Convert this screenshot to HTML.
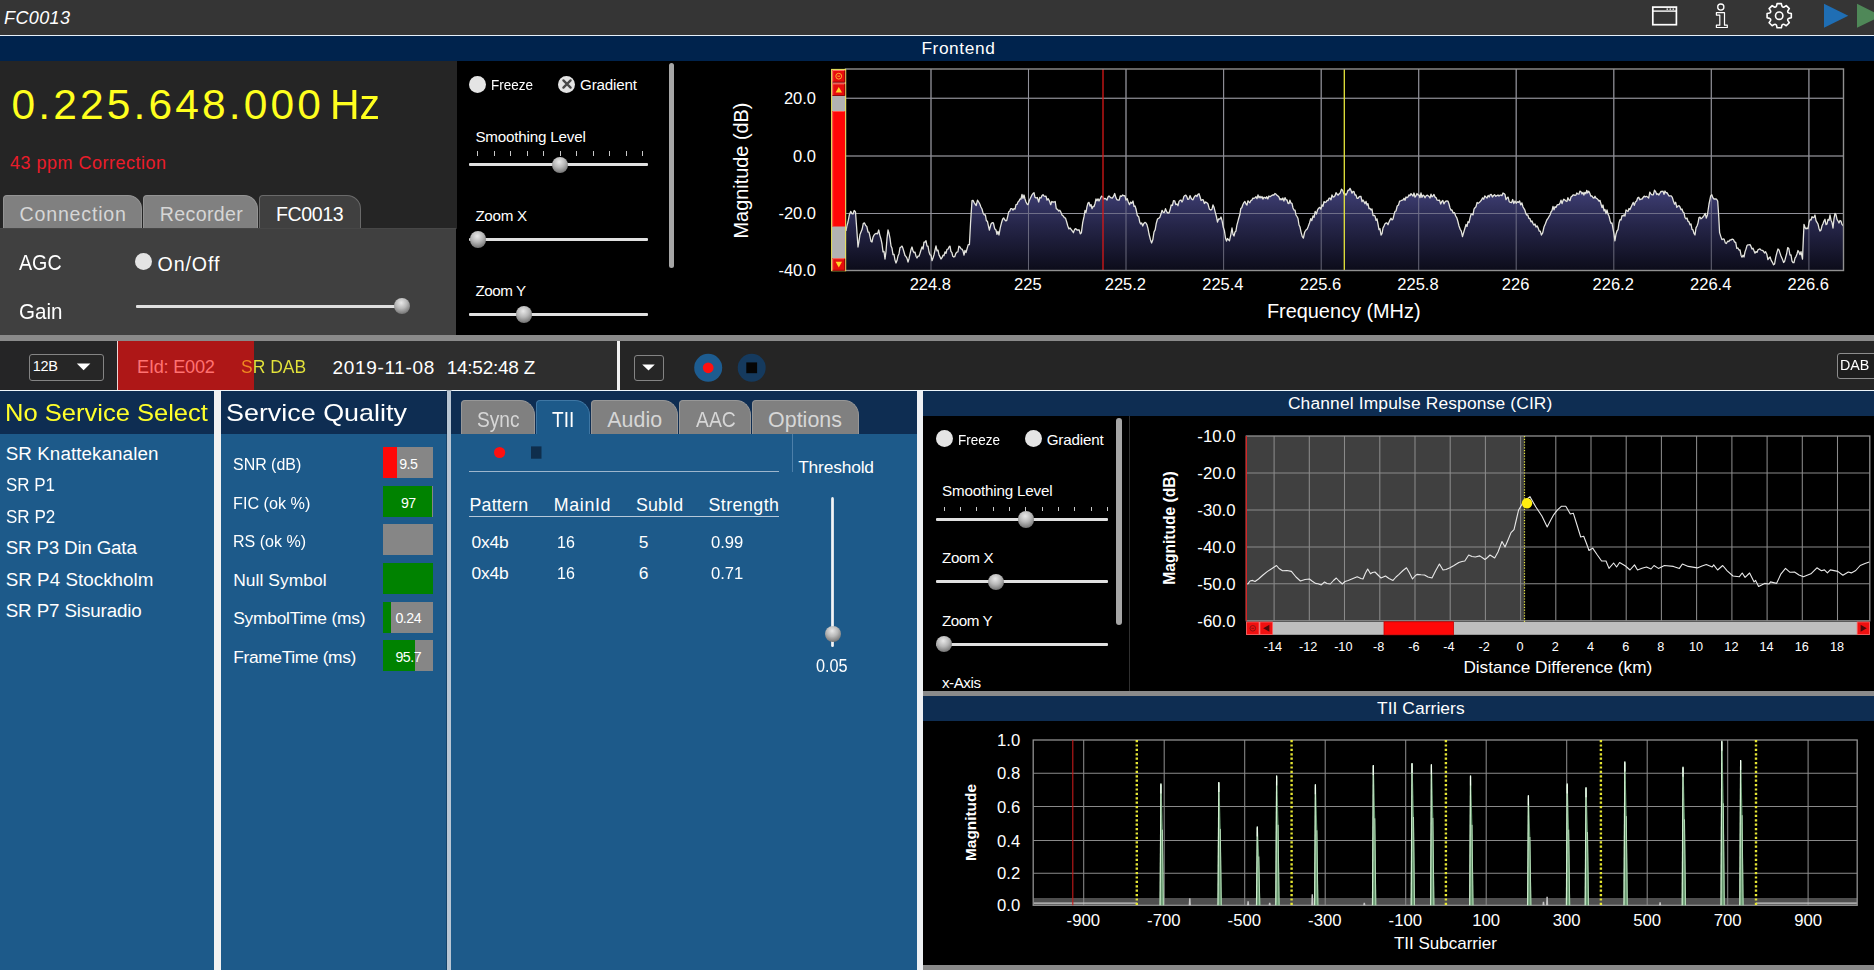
<!DOCTYPE html>
<html lang="en"><head><meta charset="utf-8"><title>FC0013</title>
<style>
*{margin:0;padding:0;box-sizing:border-box}
html,body{width:1874px;height:970px;overflow:hidden;background:#000}
body{position:relative;font-family:"Liberation Sans",Arial,sans-serif;color:#fff}
div,span.t,svg{position:absolute}
span.t{white-space:nowrap;display:block}
.thumb{width:16.4px;height:16.4px;border-radius:50%;background:radial-gradient(circle at 45% 30%,#e8e8e8 0%,#b8b8b8 40%,#6a6a6a 85%,#555 100%)}
.radio{width:17px;height:17px;border-radius:50%;background:#e4e4e4}
.trk{height:3px;background:#e0e0e0;border-radius:1px}
</style></head>
<body>
<div class="titlebar" style="left:0px;top:0px;width:1874px;height:35px;background:#353535;"></div>
<div style="left:0px;top:34.7px;width:1874px;height:1.5px;background:#e6f0fa;"></div>
<div class="fe-title" style="left:0px;top:36px;width:1874px;height:25px;background:#00234d;"></div>
<span class="t" style="left:4.00px;top:6.56px;font-size:18px;line-height:23px;color:#fff;letter-spacing:0.384px;font-style:italic;">FC0013</span>
<span class="t" style="left:921.40px;top:36.71px;font-size:17.3px;line-height:22px;color:#fff;letter-spacing:0.602px;">Frontend</span>
<svg style="left:1640px;top:0" width="234" height="35" viewBox="1640 0 234 35" fill="none" stroke="#fff">
<rect x="1652.8" y="7.1" width="23.6" height="17.6" stroke-width="1.7"/>
<line x1="1652.8" y1="11.1" x2="1676.4" y2="11.1" stroke-width="1.4"/>
<line x1="1666.5" y1="9.2" x2="1674.5" y2="9.2" stroke-width="1.2" stroke-dasharray="1.6 1.4"/>
<circle cx="1720.8" cy="7.1" r="3.1" stroke-width="1.3"/>
<path d="M1716.4 12.7H1724.5V25.2H1727.3V27.5H1716.4V25.2H1719.8V15.1H1716.4Z" stroke-width="1.2" stroke-linejoin="round"/>
<path id="gear" stroke-width="1.6" stroke-linejoin="round" d="M1776.53 6.06L1777.06 3.59L1781.34 3.59L1781.87 6.06Q1782.53 7.66 1784.13 7.00L1786.25 5.62L1789.28 8.65L1787.90 10.77Q1787.24 12.37 1788.84 13.03L1791.31 13.56L1791.31 17.84L1788.84 18.37Q1787.24 19.03 1787.90 20.63L1789.28 22.75L1786.25 25.78L1784.13 24.40Q1782.53 23.74 1781.87 25.34L1781.34 27.81L1777.06 27.81L1776.53 25.34Q1775.87 23.74 1774.27 24.40L1772.15 25.78L1769.12 22.75L1770.50 20.63Q1771.16 19.03 1769.56 18.37L1767.09 17.84L1767.09 13.56L1769.56 13.03Q1771.16 12.37 1770.50 10.77L1769.12 8.65L1772.15 5.62L1774.27 7.00Q1775.87 7.66 1776.53 6.06Z"/>
<circle cx="1779.2" cy="15.7" r="3.7" stroke-width="1.6"/>
<path d="M1824 3.8L1848.3 15.8L1824 27.8Z" fill="#1f6eb4" stroke="none"/>
<path d="M1857 3.8L1881.3 15.8L1857 27.8Z" fill="#4f8858" stroke="none"/>
</svg>
<div class="tuner" style="left:0px;top:61px;width:457px;height:168px;background:#252525;"></div>
<span class="t" style="left:11.50px;top:77.97px;font-size:42.5px;line-height:54px;color:#ffff1e;letter-spacing:3.143px;">0.225.648.000</span>
<span class="t" style="left:330.30px;top:77.97px;font-size:42.5px;line-height:54px;color:#ffff1e;transform:scaleX(0.9643);transform-origin:0 50%;">Hz</span>
<span class="t" style="left:10.00px;top:151.56px;font-size:18px;line-height:23px;color:#ea1c2a;letter-spacing:0.497px;">43 ppm Correction</span>
<div class="tab" style="left:3px;top:195px;width:139px;height:33.4px;background:#808080;border-radius:4px 14px 0 0;border:1px solid #949494;border-bottom:none;"></div>
<span class="t" style="left:19.50px;top:202.11px;font-size:19.6px;line-height:25px;color:#d6d6d6;letter-spacing:0.814px;">Connection</span>
<div class="tab" style="left:143px;top:195px;width:115px;height:33.4px;background:#808080;border-radius:4px 14px 0 0;border:1px solid #949494;border-bottom:none;"></div>
<span class="t" style="left:159.80px;top:202.11px;font-size:19.6px;line-height:25px;color:#d6d6d6;letter-spacing:0.335px;">Recorder</span>
<div class="tab" style="left:259px;top:195px;width:102px;height:33.4px;background:#404040;border-radius:4px 14px 0 0;border:1px solid #6a6a6a;border-bottom:none;"></div>
<span class="t" style="left:275.90px;top:202.11px;font-size:19.6px;line-height:25px;color:#fff;letter-spacing:-0.415px;">FC0013</span>
<div class="tabpage" style="left:0px;top:228px;width:456px;height:107px;background:#404040;border-top:1px solid #474747;"></div>
<span class="t" style="left:18.50px;top:249.38px;font-size:21.7px;line-height:28px;color:#fff;transform:scaleX(0.9068);transform-origin:0 50%;">AGC</span>
<span class="t" style="left:18.50px;top:297.68px;font-size:21.7px;line-height:28px;color:#fff;transform:scaleX(0.9479);transform-origin:0 50%;">Gain</span>
<div class="radio" style="left:135.2px;top:253.0px"></div>
<span class="t" style="left:157.50px;top:251.51px;font-size:19.6px;line-height:25px;color:#fff;letter-spacing:0.914px;">On/Off</span>
<div class="trk" style="left:136.0px;top:304.5px;width:265.0px"></div>
<div class="thumb" style="left:393.8px;top:297.8px"></div>
<div class="fe-ctrl" style="left:457px;top:61px;width:220px;height:274px;background:#000;"></div>
<div class="radio" style="left:469.0px;top:75.5px"></div>
<span class="t" style="left:491.00px;top:75.23px;font-size:15.2px;line-height:19px;color:#fff;transform:scaleX(0.8885);transform-origin:0 50%;">Freeze</span>
<div class="radio" style="left:558.1px;top:75.5px"></div>
<svg style="left:557.6px;top:75.0px" width="18" height="18" viewBox="-9 -9 18 18"><path d="M-3.6 -3.6L3.6 3.6M3.6 -3.6L-3.6 3.6" stroke="#484848" stroke-width="2.3" stroke-linecap="round"/></svg>
<span class="t" style="left:580.00px;top:75.23px;font-size:15.2px;line-height:19px;color:#fff;letter-spacing:-0.185px;">Gradient</span>
<span class="t" style="left:475.40px;top:126.73px;font-size:15.2px;line-height:19px;color:#fff;letter-spacing:-0.189px;">Smoothing Level</span>
<div style="left:477.0px;top:151px;width:1px;height:5px;background:#c8c8c8"></div><div style="left:493.5px;top:151px;width:1px;height:5px;background:#c8c8c8"></div><div style="left:510.1px;top:151px;width:1px;height:5px;background:#c8c8c8"></div><div style="left:526.6px;top:151px;width:1px;height:5px;background:#c8c8c8"></div><div style="left:543.1px;top:151px;width:1px;height:5px;background:#c8c8c8"></div><div style="left:559.6px;top:151px;width:1px;height:5px;background:#c8c8c8"></div><div style="left:576.2px;top:151px;width:1px;height:5px;background:#c8c8c8"></div><div style="left:592.7px;top:151px;width:1px;height:5px;background:#c8c8c8"></div><div style="left:609.2px;top:151px;width:1px;height:5px;background:#c8c8c8"></div><div style="left:625.8px;top:151px;width:1px;height:5px;background:#c8c8c8"></div><div style="left:642.3px;top:151px;width:1px;height:5px;background:#c8c8c8"></div>
<div class="trk" style="left:469.4px;top:163.2px;width:178.4px"></div>
<div class="thumb" style="left:551.8px;top:156.5px"></div>
<span class="t" style="left:475.40px;top:206.43px;font-size:15.2px;line-height:19px;color:#fff;letter-spacing:-0.300px;">Zoom X</span>
<div class="trk" style="left:469.4px;top:237.9px;width:178.4px"></div>
<div class="thumb" style="left:469.6px;top:231.2px"></div>
<span class="t" style="left:475.40px;top:281.43px;font-size:15.2px;line-height:19px;color:#fff;letter-spacing:-0.434px;">Zoom Y</span>
<div class="trk" style="left:469.4px;top:312.9px;width:178.4px"></div>
<div class="thumb" style="left:515.6px;top:306.2px"></div>
<div class="sb" style="left:668.5px;top:62.5px;width:5.5px;height:205.5px;background:#a6a6a6;border-radius:3px;"></div>
<div class="fe-plot" style="left:677px;top:61px;width:1197px;height:274px;background:#000;"></div>
<svg class="fe-chart" style="left:700px;top:61px" width="1174" height="274" viewBox="700 61 1174 274" font-family="Liberation Sans,Arial,sans-serif">
<defs><linearGradient id="feg" x1="0" y1="185" x2="0" y2="272" gradientUnits="userSpaceOnUse"><stop offset="0" stop-color="#42427a"/><stop offset="0.45" stop-color="#26264a"/><stop offset="1" stop-color="#0b0b18"/></linearGradient></defs>
<path d="M931.0 69V270.5M1028.5 69V270.5M1126.0 69V270.5M1223.6 69V270.5M1321.2 69V270.5M1418.7 69V270.5M1516.2 69V270.5M1613.8 69V270.5M1711.3 69V270.5M1808.9 69V270.5M845.5 98.3H1843.5M845.5 156H1843.5M845.5 213.4H1843.5" stroke="#868686" stroke-width="1.05" fill="none"/>
<polygon points="846.5,270.5 846.0,231.0 847.0,225.5 848.0,222.0 849.4,214.7 850.7,211.4 851.9,213.6 853.0,214.0 854.2,210.5 855.5,212.0 856.8,229.7 858.0,247.0 859.0,241.2 860.0,234.4 861.0,232.0 862.2,229.0 863.3,223.3 864.5,223.0 865.7,225.6 866.8,226.5 868.0,232.0 869.0,232.1 870.0,236.6 871.0,241.4 872.0,242.0 873.0,237.2 874.0,235.1 875.0,234.0 876.2,233.4 877.5,233.9 878.7,230.0 879.8,235.1 880.9,238.7 882.0,244.0 883.0,251.8 884.0,251.4 885.0,259.0 886.0,251.4 887.0,238.4 888.0,230.0 889.0,233.3 890.0,238.4 891.0,246.0 892.0,248.3 893.0,254.6 894.0,254.3 895.0,260.1 896.0,263.0 897.0,260.6 898.0,255.9 899.0,253.7 900.0,247.7 901.0,247.0 902.0,246.1 903.0,248.6 904.0,252.0 905.0,255.5 906.0,256.6 907.0,258.4 908.0,262.0 909.0,258.7 910.0,254.2 911.0,249.6 912.0,247.0 913.0,250.9 914.0,252.6 915.0,252.1 916.0,256.2 917.0,258.0 918.0,256.1 919.0,256.2 920.0,253.3 921.0,250.0 922.0,246.9 923.0,249.1 924.0,242.2 925.0,242.1 926.0,240.7 927.0,246.0 928.0,246.2 929.0,252.0 930.0,254.8 931.0,255.1 932.0,260.7 933.0,258.0 934.0,254.9 935.0,250.1 936.0,246.0 937.0,250.8 938.0,250.1 939.0,254.9 940.0,256.9 941.0,259.0 942.0,257.7 943.0,255.2 944.0,255.7 945.0,252.0 946.0,253.3 947.0,249.3 948.0,249.2 949.0,247.0 950.0,246.1 950.9,251.4 951.9,252.7 952.8,256.3 953.8,257.0 954.7,256.7 955.8,253.5 956.8,252.2 957.9,251.9 958.9,246.2 960.0,247.0 961.0,248.8 962.0,249.1 963.0,250.8 964.0,255.0 965.0,250.4 966.0,252.6 967.0,249.0 968.2,244.7 969.4,244.7 970.6,222.0 972.0,200.7 973.0,200.3 974.0,202.3 975.0,204.0 976.2,205.5 977.5,200.2 978.7,202.0 979.8,204.0 980.9,207.0 982.0,209.0 983.1,213.2 984.3,214.9 985.4,215.0 986.4,220.9 987.4,221.2 988.4,225.8 989.4,230.0 991.0,224.0 992.2,222.7 993.4,223.0 994.7,228.7 996.0,230.0 997.0,234.3 998.0,231.3 999.0,235.0 1000.2,227.8 1001.5,222.8 1002.7,219.0 1003.7,217.9 1004.7,219.8 1005.7,220.8 1006.7,220.7 1007.7,216.3 1008.7,211.8 1009.7,211.2 1010.7,208.7 1011.9,208.6 1013.0,210.0 1014.0,208.6 1015.0,209.1 1016.0,204.7 1017.0,204.4 1018.0,201.9 1019.0,201.1 1020.0,199.0 1021.0,199.0 1022.0,194.4 1023.0,198.3 1024.0,195.0 1025.0,199.0 1026.0,202.0 1027.0,204.0 1028.0,204.7 1029.2,200.7 1030.5,198.0 1031.8,195.2 1033.0,193.5 1034.0,192.7 1035.0,197.3 1036.0,198.0 1037.3,197.5 1038.7,202.0 1039.8,197.5 1041.0,198.0 1042.0,195.6 1043.0,194.7 1044.0,196.0 1045.0,196.4 1046.0,196.1 1047.0,200.0 1048.2,198.7 1049.5,201.1 1050.7,204.7 1051.8,201.5 1052.9,202.1 1054.0,202.0 1055.2,201.5 1056.3,208.7 1057.5,209.4 1058.7,211.0 1059.8,210.3 1060.9,212.2 1062.0,215.0 1063.2,215.9 1064.3,217.7 1065.5,218.1 1066.7,222.0 1067.8,226.0 1068.9,228.9 1070.0,228.0 1071.1,229.4 1072.3,231.0 1073.4,232.7 1074.6,229.4 1075.8,228.6 1077.0,230.0 1078.1,229.8 1079.2,230.0 1080.3,233.9 1081.4,232.7 1082.7,222.7 1084.0,216.7 1085.0,210.5 1086.0,212.5 1087.0,206.6 1088.0,203.0 1089.0,202.4 1090.0,206.1 1091.0,204.5 1092.0,208.7 1093.0,206.4 1094.0,206.6 1095.0,203.5 1096.0,199.0 1097.0,200.8 1098.0,198.9 1099.0,201.0 1100.2,198.8 1101.5,196.2 1102.7,196.7 1103.8,199.0 1104.9,198.4 1106.0,199.0 1107.0,200.1 1108.0,197.0 1109.0,195.9 1110.0,197.0 1111.2,197.9 1112.3,198.1 1113.5,196.4 1114.7,193.5 1115.8,197.4 1116.9,199.7 1118.0,200.0 1119.2,200.1 1120.3,195.9 1121.5,196.4 1122.7,195.0 1123.8,195.8 1124.9,195.6 1126.0,200.0 1127.2,198.8 1128.3,201.9 1129.5,204.7 1130.7,202.1 1131.8,203.3 1133.0,201.0 1134.0,206.3 1135.0,206.0 1136.0,209.0 1137.3,215.4 1138.7,216.7 1139.7,221.9 1140.7,224.0 1141.7,222.9 1142.7,226.0 1143.8,223.4 1144.9,222.4 1146.0,223.0 1147.0,224.9 1148.0,228.6 1149.0,234.0 1150.3,239.2 1151.6,243.0 1152.8,239.8 1154.0,232.0 1155.2,229.6 1156.3,223.2 1157.5,219.0 1158.7,218.2 1159.8,217.4 1161.0,214.0 1162.1,210.3 1163.2,212.3 1164.4,212.4 1165.5,208.7 1166.7,211.8 1167.8,213.0 1169.0,213.0 1170.1,209.8 1171.2,205.0 1172.4,205.5 1173.5,200.7 1174.7,200.8 1175.8,204.6 1177.0,204.0 1178.0,205.7 1179.0,201.4 1180.0,200.4 1181.0,200.0 1182.0,202.0 1182.9,200.2 1183.9,196.4 1184.9,195.6 1185.8,195.2 1186.8,196.7 1187.8,199.4 1188.9,199.1 1190.0,195.6 1191.0,198.0 1192.0,199.4 1193.0,199.8 1194.0,197.4 1195.0,196.0 1196.0,195.3 1197.0,196.6 1198.0,194.3 1199.0,193.7 1200.0,196.7 1201.1,200.5 1202.2,199.7 1203.3,200.0 1204.4,203.5 1205.5,202.0 1206.8,202.6 1208.0,204.0 1209.4,209.2 1210.8,210.0 1211.9,209.4 1213.0,205.0 1214.1,207.6 1215.2,212.1 1216.4,216.5 1217.5,222.0 1218.7,218.8 1219.8,219.2 1221.0,217.0 1222.1,220.9 1223.2,227.0 1224.4,230.6 1225.5,238.0 1226.5,241.1 1227.5,238.5 1228.5,239.8 1229.5,240.7 1230.8,234.8 1232.0,228.0 1233.0,234.3 1234.0,236.0 1235.0,231.9 1235.9,231.2 1236.9,225.2 1237.8,221.8 1238.8,218.0 1239.8,214.8 1240.8,208.6 1241.8,207.7 1242.8,204.7 1243.9,202.6 1244.9,201.4 1246.0,204.0 1247.0,205.1 1247.9,200.8 1248.9,201.9 1249.8,202.7 1250.8,200.7 1251.8,200.2 1252.9,198.1 1253.9,198.4 1255.0,197.8 1256.0,196.7 1257.0,198.6 1258.0,194.9 1259.0,197.8 1260.0,196.3 1261.0,198.0 1262.0,196.5 1262.9,199.1 1263.9,197.4 1264.9,197.5 1265.8,198.4 1266.8,196.7 1267.8,198.9 1268.9,196.0 1270.0,196.8 1271.0,196.0 1272.0,195.4 1273.0,194.8 1273.9,195.2 1274.9,193.5 1275.9,194.1 1277.0,195.4 1278.0,196.0 1279.0,197.0 1280.0,199.8 1281.0,198.7 1281.9,199.9 1282.9,198.0 1283.9,201.1 1285.0,197.6 1286.0,199.8 1287.0,200.0 1288.0,203.3 1289.0,203.5 1289.9,200.1 1290.9,203.0 1292.0,203.3 1293.0,208.0 1294.0,210.0 1295.0,210.2 1296.0,215.0 1297.0,216.5 1298.0,218.5 1299.0,225.0 1300.0,227.0 1301.1,232.3 1302.3,236.6 1303.4,238.0 1304.7,232.0 1306.0,230.0 1307.2,228.9 1308.3,226.3 1309.5,223.0 1310.7,218.6 1311.8,220.6 1313.0,216.0 1314.1,217.2 1315.2,211.4 1316.4,214.1 1317.5,210.0 1318.6,208.2 1319.8,207.4 1320.9,209.1 1322.0,205.0 1323.0,206.2 1324.0,201.6 1325.0,202.5 1326.0,202.2 1327.0,200.5 1328.0,200.7 1329.0,198.2 1330.0,198.2 1331.0,199.8 1332.0,195.0 1333.0,197.0 1334.0,196.8 1335.0,195.7 1336.0,192.7 1337.0,194.0 1338.0,195.2 1339.0,194.0 1340.2,192.9 1341.5,189.1 1342.7,190.4 1343.8,193.9 1344.8,193.4 1345.9,195.1 1347.0,193.0 1348.0,190.1 1349.0,190.3 1350.0,188.4 1351.0,190.4 1352.0,193.2 1353.0,191.4 1354.0,191.7 1355.0,195.0 1356.0,195.0 1357.0,198.4 1358.0,198.4 1359.0,197.0 1360.0,196.3 1361.0,196.5 1362.0,201.7 1363.0,200.0 1364.0,201.7 1365.0,203.7 1366.0,201.4 1367.0,205.0 1368.0,203.7 1369.0,208.6 1370.0,208.3 1371.0,210.0 1372.0,209.0 1373.0,215.5 1374.0,215.3 1375.0,216.0 1376.0,220.4 1377.0,218.9 1378.0,224.0 1379.0,229.7 1380.0,228.8 1381.0,235.0 1382.0,233.6 1383.0,228.0 1384.0,226.1 1385.0,223.7 1386.0,223.0 1387.0,223.0 1388.0,224.8 1389.0,222.0 1390.0,219.9 1391.0,218.3 1392.0,219.9 1393.0,219.0 1394.0,214.8 1395.0,211.4 1396.0,211.0 1397.2,206.0 1398.5,205.0 1399.6,201.1 1400.8,200.8 1401.9,200.2 1403.0,200.0 1404.0,198.3 1405.0,200.3 1406.0,197.0 1407.0,197.6 1408.0,197.0 1409.0,194.9 1410.0,195.7 1411.0,193.6 1412.0,194.8 1413.0,196.0 1414.0,193.0 1415.0,197.0 1416.0,195.8 1417.0,193.5 1418.0,195.0 1419.0,195.0 1420.0,197.7 1421.0,193.0 1422.0,197.3 1423.0,195.2 1424.0,195.7 1425.0,197.8 1426.0,196.0 1427.0,195.2 1428.0,195.7 1429.0,196.5 1430.0,198.0 1431.0,194.2 1432.0,196.8 1433.0,195.9 1434.0,194.5 1435.0,197.1 1436.0,197.6 1437.0,200.0 1438.2,200.4 1439.5,200.1 1440.7,204.0 1441.8,201.4 1442.8,200.5 1443.9,203.9 1445.0,202.0 1446.0,201.1 1447.0,201.0 1448.0,201.1 1449.0,204.0 1450.0,208.0 1451.0,210.1 1452.0,210.0 1453.2,213.0 1454.5,212.7 1455.7,216.0 1456.8,217.8 1457.9,221.5 1459.0,226.0 1460.2,229.3 1461.3,231.1 1462.5,236.7 1463.8,232.0 1465.0,228.0 1466.0,224.5 1467.0,226.5 1468.0,221.7 1469.0,222.5 1470.0,218.1 1471.0,214.4 1472.0,214.0 1473.0,214.9 1474.0,209.2 1475.0,207.7 1476.0,206.7 1477.1,202.5 1478.2,203.3 1479.3,202.5 1480.4,201.4 1481.5,200.0 1482.6,197.9 1483.7,199.2 1484.8,195.9 1485.9,197.0 1487.0,198.0 1488.1,195.4 1489.2,197.0 1490.2,194.7 1491.3,194.4 1492.4,197.0 1493.5,195.5 1494.6,194.7 1495.8,196.3 1496.9,195.6 1498.0,195.0 1499.0,196.1 1500.0,195.1 1501.0,195.1 1502.0,195.6 1503.0,193.0 1504.0,193.6 1505.0,194.5 1506.0,199.6 1507.0,198.0 1508.1,197.1 1509.2,201.7 1510.4,202.4 1511.5,202.7 1512.7,199.5 1513.8,203.5 1515.0,201.0 1516.2,203.3 1517.3,201.7 1518.4,202.4 1519.6,201.0 1520.7,204.8 1521.9,202.9 1523.0,207.0 1524.0,208.7 1524.9,210.2 1525.9,213.7 1526.8,215.2 1527.8,215.0 1528.8,218.4 1529.9,218.5 1531.0,221.8 1532.0,221.0 1533.0,223.6 1534.0,225.1 1535.0,223.9 1536.0,227.0 1537.1,225.9 1538.2,228.1 1539.2,231.0 1540.3,231.1 1541.4,235.0 1542.7,232.9 1544.0,227.0 1545.4,223.8 1546.8,220.0 1547.8,218.7 1548.9,216.7 1550.0,215.0 1551.0,212.0 1552.0,210.6 1553.0,206.5 1554.0,209.8 1555.0,206.7 1556.0,207.4 1557.0,205.2 1558.0,204.7 1559.0,204.7 1560.0,203.0 1561.0,200.1 1562.0,203.7 1563.0,200.6 1563.9,199.2 1564.9,200.0 1565.9,201.0 1566.9,201.5 1567.9,197.7 1569.0,200.0 1570.0,200.6 1571.0,197.0 1572.0,196.3 1572.9,195.0 1573.9,194.9 1574.9,195.4 1575.8,195.2 1576.8,193.0 1577.8,193.9 1578.9,194.2 1579.9,191.1 1581.0,191.8 1582.0,194.0 1583.0,192.4 1583.9,195.1 1584.8,192.4 1585.8,193.7 1586.8,190.3 1587.7,193.0 1588.8,191.2 1589.8,193.2 1590.9,196.2 1592.0,196.0 1593.0,197.6 1594.0,198.1 1595.0,196.3 1596.0,198.2 1597.0,198.6 1598.0,199.7 1599.0,201.1 1600.0,200.4 1601.0,204.0 1602.0,207.7 1603.0,205.0 1604.0,210.9 1605.0,209.5 1606.0,213.7 1607.0,210.0 1608.0,214.1 1609.0,216.0 1610.0,220.2 1611.0,223.4 1612.0,223.0 1613.0,228.6 1613.9,233.5 1614.9,240.8 1616.0,234.2 1617.0,231.0 1618.0,229.6 1619.0,223.0 1620.0,219.6 1621.0,220.0 1622.0,215.7 1623.0,216.0 1624.0,214.8 1625.0,216.0 1626.0,210.0 1627.0,210.8 1628.0,211.5 1629.0,208.5 1630.0,209.6 1631.0,207.3 1632.0,205.0 1633.2,202.4 1634.3,205.3 1635.4,201.9 1636.6,201.0 1637.7,197.8 1638.8,197.3 1639.8,199.8 1640.9,199.1 1642.0,199.0 1643.1,197.5 1644.2,196.1 1645.3,196.9 1646.4,196.3 1647.5,197.0 1648.7,198.0 1649.8,192.1 1651.0,194.0 1652.2,194.9 1653.3,194.9 1654.5,190.1 1655.7,191.8 1656.8,194.6 1657.8,193.6 1658.9,195.0 1660.0,193.0 1661.0,191.4 1662.0,191.5 1663.0,191.2 1664.0,194.3 1665.0,191.0 1666.0,192.8 1667.0,192.7 1668.0,194.3 1669.0,196.0 1670.1,195.9 1671.2,195.9 1672.3,197.4 1673.4,201.0 1674.6,204.2 1675.7,202.3 1676.8,207.3 1678.0,206.0 1679.0,205.7 1680.0,207.0 1681.0,209.7 1682.0,209.0 1683.0,212.0 1684.0,212.8 1685.0,217.6 1686.0,218.7 1687.0,218.0 1688.0,221.3 1689.0,221.8 1690.0,224.9 1691.0,224.0 1692.0,229.3 1693.0,229.8 1694.0,233.5 1695.0,235.0 1696.0,227.9 1697.0,226.0 1698.0,223.1 1699.0,217.6 1700.0,217.2 1701.0,218.8 1702.0,218.0 1703.0,217.0 1704.1,215.3 1705.2,213.4 1706.3,218.0 1707.4,215.0 1709.0,204.0 1710.7,195.9 1711.8,194.8 1712.9,197.8 1714.0,199.0 1715.2,198.8 1716.5,199.2 1717.7,201.0 1718.7,216.0 1719.6,232.6 1720.7,236.1 1721.9,239.6 1723.0,239.0 1724.1,239.1 1725.3,242.9 1726.4,243.5 1727.6,241.2 1728.8,241.5 1730.0,240.0 1731.2,239.9 1732.3,239.1 1733.4,239.5 1734.6,242.0 1735.7,242.3 1736.8,248.4 1737.9,248.0 1739.0,250.0 1740.0,249.8 1741.0,255.2 1742.0,257.1 1743.0,255.3 1744.0,257.0 1745.0,251.9 1746.0,249.1 1747.0,245.5 1748.0,244.8 1749.0,244.9 1750.0,244.5 1751.0,246.4 1752.0,249.0 1753.0,248.2 1754.0,250.7 1755.0,253.2 1756.0,251.6 1757.0,252.4 1758.0,249.8 1759.0,249.2 1760.0,249.0 1761.1,250.1 1762.2,250.3 1763.4,251.1 1764.5,253.0 1765.6,251.7 1766.8,254.2 1767.9,259.5 1769.0,258.0 1770.1,257.0 1771.2,260.4 1772.4,262.3 1773.5,264.8 1774.6,263.9 1775.7,257.3 1776.9,252.6 1778.0,249.0 1779.0,249.9 1780.0,253.1 1781.0,256.0 1782.3,258.9 1783.6,262.5 1784.6,261.4 1785.7,257.1 1786.7,253.5 1787.7,247.6 1788.8,248.5 1790.0,255.0 1791.0,254.8 1792.0,261.2 1793.0,262.5 1794.0,262.7 1795.0,258.1 1796.0,256.6 1797.0,254.0 1798.0,250.5 1799.0,252.2 1800.0,254.7 1801.0,251.6 1802.5,259.0 1803.3,240.0 1804.0,224.4 1805.0,227.5 1806.0,228.9 1807.0,228.0 1808.0,228.7 1809.0,222.5 1810.0,219.7 1811.0,220.0 1812.0,216.7 1813.0,217.6 1814.0,217.3 1815.0,215.0 1816.0,220.6 1817.0,222.3 1818.0,224.0 1819.0,228.4 1820.0,231.0 1821.0,230.0 1822.0,225.8 1823.0,223.8 1824.0,221.0 1825.0,219.3 1826.0,224.6 1827.0,224.0 1828.0,219.4 1829.0,220.4 1830.0,215.0 1831.0,220.2 1832.0,222.5 1833.0,228.0 1834.0,218.6 1835.0,213.5 1836.0,214.6 1837.0,219.3 1838.0,221.0 1839.0,223.0 1840.0,220.5 1841.0,221.1 1842.0,224.4 1843.5,226.0 1843.0,270.5" fill="url(#feg)"/>
<path d="M931.0 69V270.5M1028.5 69V270.5M1126.0 69V270.5M1223.6 69V270.5M1321.2 69V270.5M1418.7 69V270.5M1516.2 69V270.5M1613.8 69V270.5M1711.3 69V270.5M1808.9 69V270.5M845.5 98.3H1843.5M845.5 156H1843.5M845.5 213.4H1843.5" stroke="#9a9aa8" stroke-width="1.05" fill="none" opacity="0.6"/>
<polyline points="846.0,231.0 847.0,225.5 848.0,222.0 849.4,214.7 850.7,211.4 851.9,213.6 853.0,214.0 854.2,210.5 855.5,212.0 856.8,229.7 858.0,247.0 859.0,241.2 860.0,234.4 861.0,232.0 862.2,229.0 863.3,223.3 864.5,223.0 865.7,225.6 866.8,226.5 868.0,232.0 869.0,232.1 870.0,236.6 871.0,241.4 872.0,242.0 873.0,237.2 874.0,235.1 875.0,234.0 876.2,233.4 877.5,233.9 878.7,230.0 879.8,235.1 880.9,238.7 882.0,244.0 883.0,251.8 884.0,251.4 885.0,259.0 886.0,251.4 887.0,238.4 888.0,230.0 889.0,233.3 890.0,238.4 891.0,246.0 892.0,248.3 893.0,254.6 894.0,254.3 895.0,260.1 896.0,263.0 897.0,260.6 898.0,255.9 899.0,253.7 900.0,247.7 901.0,247.0 902.0,246.1 903.0,248.6 904.0,252.0 905.0,255.5 906.0,256.6 907.0,258.4 908.0,262.0 909.0,258.7 910.0,254.2 911.0,249.6 912.0,247.0 913.0,250.9 914.0,252.6 915.0,252.1 916.0,256.2 917.0,258.0 918.0,256.1 919.0,256.2 920.0,253.3 921.0,250.0 922.0,246.9 923.0,249.1 924.0,242.2 925.0,242.1 926.0,240.7 927.0,246.0 928.0,246.2 929.0,252.0 930.0,254.8 931.0,255.1 932.0,260.7 933.0,258.0 934.0,254.9 935.0,250.1 936.0,246.0 937.0,250.8 938.0,250.1 939.0,254.9 940.0,256.9 941.0,259.0 942.0,257.7 943.0,255.2 944.0,255.7 945.0,252.0 946.0,253.3 947.0,249.3 948.0,249.2 949.0,247.0 950.0,246.1 950.9,251.4 951.9,252.7 952.8,256.3 953.8,257.0 954.7,256.7 955.8,253.5 956.8,252.2 957.9,251.9 958.9,246.2 960.0,247.0 961.0,248.8 962.0,249.1 963.0,250.8 964.0,255.0 965.0,250.4 966.0,252.6 967.0,249.0 968.2,244.7 969.4,244.7 970.6,222.0 972.0,200.7 973.0,200.3 974.0,202.3 975.0,204.0 976.2,205.5 977.5,200.2 978.7,202.0 979.8,204.0 980.9,207.0 982.0,209.0 983.1,213.2 984.3,214.9 985.4,215.0 986.4,220.9 987.4,221.2 988.4,225.8 989.4,230.0 991.0,224.0 992.2,222.7 993.4,223.0 994.7,228.7 996.0,230.0 997.0,234.3 998.0,231.3 999.0,235.0 1000.2,227.8 1001.5,222.8 1002.7,219.0 1003.7,217.9 1004.7,219.8 1005.7,220.8 1006.7,220.7 1007.7,216.3 1008.7,211.8 1009.7,211.2 1010.7,208.7 1011.9,208.6 1013.0,210.0 1014.0,208.6 1015.0,209.1 1016.0,204.7 1017.0,204.4 1018.0,201.9 1019.0,201.1 1020.0,199.0 1021.0,199.0 1022.0,194.4 1023.0,198.3 1024.0,195.0 1025.0,199.0 1026.0,202.0 1027.0,204.0 1028.0,204.7 1029.2,200.7 1030.5,198.0 1031.8,195.2 1033.0,193.5 1034.0,192.7 1035.0,197.3 1036.0,198.0 1037.3,197.5 1038.7,202.0 1039.8,197.5 1041.0,198.0 1042.0,195.6 1043.0,194.7 1044.0,196.0 1045.0,196.4 1046.0,196.1 1047.0,200.0 1048.2,198.7 1049.5,201.1 1050.7,204.7 1051.8,201.5 1052.9,202.1 1054.0,202.0 1055.2,201.5 1056.3,208.7 1057.5,209.4 1058.7,211.0 1059.8,210.3 1060.9,212.2 1062.0,215.0 1063.2,215.9 1064.3,217.7 1065.5,218.1 1066.7,222.0 1067.8,226.0 1068.9,228.9 1070.0,228.0 1071.1,229.4 1072.3,231.0 1073.4,232.7 1074.6,229.4 1075.8,228.6 1077.0,230.0 1078.1,229.8 1079.2,230.0 1080.3,233.9 1081.4,232.7 1082.7,222.7 1084.0,216.7 1085.0,210.5 1086.0,212.5 1087.0,206.6 1088.0,203.0 1089.0,202.4 1090.0,206.1 1091.0,204.5 1092.0,208.7 1093.0,206.4 1094.0,206.6 1095.0,203.5 1096.0,199.0 1097.0,200.8 1098.0,198.9 1099.0,201.0 1100.2,198.8 1101.5,196.2 1102.7,196.7 1103.8,199.0 1104.9,198.4 1106.0,199.0 1107.0,200.1 1108.0,197.0 1109.0,195.9 1110.0,197.0 1111.2,197.9 1112.3,198.1 1113.5,196.4 1114.7,193.5 1115.8,197.4 1116.9,199.7 1118.0,200.0 1119.2,200.1 1120.3,195.9 1121.5,196.4 1122.7,195.0 1123.8,195.8 1124.9,195.6 1126.0,200.0 1127.2,198.8 1128.3,201.9 1129.5,204.7 1130.7,202.1 1131.8,203.3 1133.0,201.0 1134.0,206.3 1135.0,206.0 1136.0,209.0 1137.3,215.4 1138.7,216.7 1139.7,221.9 1140.7,224.0 1141.7,222.9 1142.7,226.0 1143.8,223.4 1144.9,222.4 1146.0,223.0 1147.0,224.9 1148.0,228.6 1149.0,234.0 1150.3,239.2 1151.6,243.0 1152.8,239.8 1154.0,232.0 1155.2,229.6 1156.3,223.2 1157.5,219.0 1158.7,218.2 1159.8,217.4 1161.0,214.0 1162.1,210.3 1163.2,212.3 1164.4,212.4 1165.5,208.7 1166.7,211.8 1167.8,213.0 1169.0,213.0 1170.1,209.8 1171.2,205.0 1172.4,205.5 1173.5,200.7 1174.7,200.8 1175.8,204.6 1177.0,204.0 1178.0,205.7 1179.0,201.4 1180.0,200.4 1181.0,200.0 1182.0,202.0 1182.9,200.2 1183.9,196.4 1184.9,195.6 1185.8,195.2 1186.8,196.7 1187.8,199.4 1188.9,199.1 1190.0,195.6 1191.0,198.0 1192.0,199.4 1193.0,199.8 1194.0,197.4 1195.0,196.0 1196.0,195.3 1197.0,196.6 1198.0,194.3 1199.0,193.7 1200.0,196.7 1201.1,200.5 1202.2,199.7 1203.3,200.0 1204.4,203.5 1205.5,202.0 1206.8,202.6 1208.0,204.0 1209.4,209.2 1210.8,210.0 1211.9,209.4 1213.0,205.0 1214.1,207.6 1215.2,212.1 1216.4,216.5 1217.5,222.0 1218.7,218.8 1219.8,219.2 1221.0,217.0 1222.1,220.9 1223.2,227.0 1224.4,230.6 1225.5,238.0 1226.5,241.1 1227.5,238.5 1228.5,239.8 1229.5,240.7 1230.8,234.8 1232.0,228.0 1233.0,234.3 1234.0,236.0 1235.0,231.9 1235.9,231.2 1236.9,225.2 1237.8,221.8 1238.8,218.0 1239.8,214.8 1240.8,208.6 1241.8,207.7 1242.8,204.7 1243.9,202.6 1244.9,201.4 1246.0,204.0 1247.0,205.1 1247.9,200.8 1248.9,201.9 1249.8,202.7 1250.8,200.7 1251.8,200.2 1252.9,198.1 1253.9,198.4 1255.0,197.8 1256.0,196.7 1257.0,198.6 1258.0,194.9 1259.0,197.8 1260.0,196.3 1261.0,198.0 1262.0,196.5 1262.9,199.1 1263.9,197.4 1264.9,197.5 1265.8,198.4 1266.8,196.7 1267.8,198.9 1268.9,196.0 1270.0,196.8 1271.0,196.0 1272.0,195.4 1273.0,194.8 1273.9,195.2 1274.9,193.5 1275.9,194.1 1277.0,195.4 1278.0,196.0 1279.0,197.0 1280.0,199.8 1281.0,198.7 1281.9,199.9 1282.9,198.0 1283.9,201.1 1285.0,197.6 1286.0,199.8 1287.0,200.0 1288.0,203.3 1289.0,203.5 1289.9,200.1 1290.9,203.0 1292.0,203.3 1293.0,208.0 1294.0,210.0 1295.0,210.2 1296.0,215.0 1297.0,216.5 1298.0,218.5 1299.0,225.0 1300.0,227.0 1301.1,232.3 1302.3,236.6 1303.4,238.0 1304.7,232.0 1306.0,230.0 1307.2,228.9 1308.3,226.3 1309.5,223.0 1310.7,218.6 1311.8,220.6 1313.0,216.0 1314.1,217.2 1315.2,211.4 1316.4,214.1 1317.5,210.0 1318.6,208.2 1319.8,207.4 1320.9,209.1 1322.0,205.0 1323.0,206.2 1324.0,201.6 1325.0,202.5 1326.0,202.2 1327.0,200.5 1328.0,200.7 1329.0,198.2 1330.0,198.2 1331.0,199.8 1332.0,195.0 1333.0,197.0 1334.0,196.8 1335.0,195.7 1336.0,192.7 1337.0,194.0 1338.0,195.2 1339.0,194.0 1340.2,192.9 1341.5,189.1 1342.7,190.4 1343.8,193.9 1344.8,193.4 1345.9,195.1 1347.0,193.0 1348.0,190.1 1349.0,190.3 1350.0,188.4 1351.0,190.4 1352.0,193.2 1353.0,191.4 1354.0,191.7 1355.0,195.0 1356.0,195.0 1357.0,198.4 1358.0,198.4 1359.0,197.0 1360.0,196.3 1361.0,196.5 1362.0,201.7 1363.0,200.0 1364.0,201.7 1365.0,203.7 1366.0,201.4 1367.0,205.0 1368.0,203.7 1369.0,208.6 1370.0,208.3 1371.0,210.0 1372.0,209.0 1373.0,215.5 1374.0,215.3 1375.0,216.0 1376.0,220.4 1377.0,218.9 1378.0,224.0 1379.0,229.7 1380.0,228.8 1381.0,235.0 1382.0,233.6 1383.0,228.0 1384.0,226.1 1385.0,223.7 1386.0,223.0 1387.0,223.0 1388.0,224.8 1389.0,222.0 1390.0,219.9 1391.0,218.3 1392.0,219.9 1393.0,219.0 1394.0,214.8 1395.0,211.4 1396.0,211.0 1397.2,206.0 1398.5,205.0 1399.6,201.1 1400.8,200.8 1401.9,200.2 1403.0,200.0 1404.0,198.3 1405.0,200.3 1406.0,197.0 1407.0,197.6 1408.0,197.0 1409.0,194.9 1410.0,195.7 1411.0,193.6 1412.0,194.8 1413.0,196.0 1414.0,193.0 1415.0,197.0 1416.0,195.8 1417.0,193.5 1418.0,195.0 1419.0,195.0 1420.0,197.7 1421.0,193.0 1422.0,197.3 1423.0,195.2 1424.0,195.7 1425.0,197.8 1426.0,196.0 1427.0,195.2 1428.0,195.7 1429.0,196.5 1430.0,198.0 1431.0,194.2 1432.0,196.8 1433.0,195.9 1434.0,194.5 1435.0,197.1 1436.0,197.6 1437.0,200.0 1438.2,200.4 1439.5,200.1 1440.7,204.0 1441.8,201.4 1442.8,200.5 1443.9,203.9 1445.0,202.0 1446.0,201.1 1447.0,201.0 1448.0,201.1 1449.0,204.0 1450.0,208.0 1451.0,210.1 1452.0,210.0 1453.2,213.0 1454.5,212.7 1455.7,216.0 1456.8,217.8 1457.9,221.5 1459.0,226.0 1460.2,229.3 1461.3,231.1 1462.5,236.7 1463.8,232.0 1465.0,228.0 1466.0,224.5 1467.0,226.5 1468.0,221.7 1469.0,222.5 1470.0,218.1 1471.0,214.4 1472.0,214.0 1473.0,214.9 1474.0,209.2 1475.0,207.7 1476.0,206.7 1477.1,202.5 1478.2,203.3 1479.3,202.5 1480.4,201.4 1481.5,200.0 1482.6,197.9 1483.7,199.2 1484.8,195.9 1485.9,197.0 1487.0,198.0 1488.1,195.4 1489.2,197.0 1490.2,194.7 1491.3,194.4 1492.4,197.0 1493.5,195.5 1494.6,194.7 1495.8,196.3 1496.9,195.6 1498.0,195.0 1499.0,196.1 1500.0,195.1 1501.0,195.1 1502.0,195.6 1503.0,193.0 1504.0,193.6 1505.0,194.5 1506.0,199.6 1507.0,198.0 1508.1,197.1 1509.2,201.7 1510.4,202.4 1511.5,202.7 1512.7,199.5 1513.8,203.5 1515.0,201.0 1516.2,203.3 1517.3,201.7 1518.4,202.4 1519.6,201.0 1520.7,204.8 1521.9,202.9 1523.0,207.0 1524.0,208.7 1524.9,210.2 1525.9,213.7 1526.8,215.2 1527.8,215.0 1528.8,218.4 1529.9,218.5 1531.0,221.8 1532.0,221.0 1533.0,223.6 1534.0,225.1 1535.0,223.9 1536.0,227.0 1537.1,225.9 1538.2,228.1 1539.2,231.0 1540.3,231.1 1541.4,235.0 1542.7,232.9 1544.0,227.0 1545.4,223.8 1546.8,220.0 1547.8,218.7 1548.9,216.7 1550.0,215.0 1551.0,212.0 1552.0,210.6 1553.0,206.5 1554.0,209.8 1555.0,206.7 1556.0,207.4 1557.0,205.2 1558.0,204.7 1559.0,204.7 1560.0,203.0 1561.0,200.1 1562.0,203.7 1563.0,200.6 1563.9,199.2 1564.9,200.0 1565.9,201.0 1566.9,201.5 1567.9,197.7 1569.0,200.0 1570.0,200.6 1571.0,197.0 1572.0,196.3 1572.9,195.0 1573.9,194.9 1574.9,195.4 1575.8,195.2 1576.8,193.0 1577.8,193.9 1578.9,194.2 1579.9,191.1 1581.0,191.8 1582.0,194.0 1583.0,192.4 1583.9,195.1 1584.8,192.4 1585.8,193.7 1586.8,190.3 1587.7,193.0 1588.8,191.2 1589.8,193.2 1590.9,196.2 1592.0,196.0 1593.0,197.6 1594.0,198.1 1595.0,196.3 1596.0,198.2 1597.0,198.6 1598.0,199.7 1599.0,201.1 1600.0,200.4 1601.0,204.0 1602.0,207.7 1603.0,205.0 1604.0,210.9 1605.0,209.5 1606.0,213.7 1607.0,210.0 1608.0,214.1 1609.0,216.0 1610.0,220.2 1611.0,223.4 1612.0,223.0 1613.0,228.6 1613.9,233.5 1614.9,240.8 1616.0,234.2 1617.0,231.0 1618.0,229.6 1619.0,223.0 1620.0,219.6 1621.0,220.0 1622.0,215.7 1623.0,216.0 1624.0,214.8 1625.0,216.0 1626.0,210.0 1627.0,210.8 1628.0,211.5 1629.0,208.5 1630.0,209.6 1631.0,207.3 1632.0,205.0 1633.2,202.4 1634.3,205.3 1635.4,201.9 1636.6,201.0 1637.7,197.8 1638.8,197.3 1639.8,199.8 1640.9,199.1 1642.0,199.0 1643.1,197.5 1644.2,196.1 1645.3,196.9 1646.4,196.3 1647.5,197.0 1648.7,198.0 1649.8,192.1 1651.0,194.0 1652.2,194.9 1653.3,194.9 1654.5,190.1 1655.7,191.8 1656.8,194.6 1657.8,193.6 1658.9,195.0 1660.0,193.0 1661.0,191.4 1662.0,191.5 1663.0,191.2 1664.0,194.3 1665.0,191.0 1666.0,192.8 1667.0,192.7 1668.0,194.3 1669.0,196.0 1670.1,195.9 1671.2,195.9 1672.3,197.4 1673.4,201.0 1674.6,204.2 1675.7,202.3 1676.8,207.3 1678.0,206.0 1679.0,205.7 1680.0,207.0 1681.0,209.7 1682.0,209.0 1683.0,212.0 1684.0,212.8 1685.0,217.6 1686.0,218.7 1687.0,218.0 1688.0,221.3 1689.0,221.8 1690.0,224.9 1691.0,224.0 1692.0,229.3 1693.0,229.8 1694.0,233.5 1695.0,235.0 1696.0,227.9 1697.0,226.0 1698.0,223.1 1699.0,217.6 1700.0,217.2 1701.0,218.8 1702.0,218.0 1703.0,217.0 1704.1,215.3 1705.2,213.4 1706.3,218.0 1707.4,215.0 1709.0,204.0 1710.7,195.9 1711.8,194.8 1712.9,197.8 1714.0,199.0 1715.2,198.8 1716.5,199.2 1717.7,201.0 1718.7,216.0 1719.6,232.6 1720.7,236.1 1721.9,239.6 1723.0,239.0 1724.1,239.1 1725.3,242.9 1726.4,243.5 1727.6,241.2 1728.8,241.5 1730.0,240.0 1731.2,239.9 1732.3,239.1 1733.4,239.5 1734.6,242.0 1735.7,242.3 1736.8,248.4 1737.9,248.0 1739.0,250.0 1740.0,249.8 1741.0,255.2 1742.0,257.1 1743.0,255.3 1744.0,257.0 1745.0,251.9 1746.0,249.1 1747.0,245.5 1748.0,244.8 1749.0,244.9 1750.0,244.5 1751.0,246.4 1752.0,249.0 1753.0,248.2 1754.0,250.7 1755.0,253.2 1756.0,251.6 1757.0,252.4 1758.0,249.8 1759.0,249.2 1760.0,249.0 1761.1,250.1 1762.2,250.3 1763.4,251.1 1764.5,253.0 1765.6,251.7 1766.8,254.2 1767.9,259.5 1769.0,258.0 1770.1,257.0 1771.2,260.4 1772.4,262.3 1773.5,264.8 1774.6,263.9 1775.7,257.3 1776.9,252.6 1778.0,249.0 1779.0,249.9 1780.0,253.1 1781.0,256.0 1782.3,258.9 1783.6,262.5 1784.6,261.4 1785.7,257.1 1786.7,253.5 1787.7,247.6 1788.8,248.5 1790.0,255.0 1791.0,254.8 1792.0,261.2 1793.0,262.5 1794.0,262.7 1795.0,258.1 1796.0,256.6 1797.0,254.0 1798.0,250.5 1799.0,252.2 1800.0,254.7 1801.0,251.6 1802.5,259.0 1803.3,240.0 1804.0,224.4 1805.0,227.5 1806.0,228.9 1807.0,228.0 1808.0,228.7 1809.0,222.5 1810.0,219.7 1811.0,220.0 1812.0,216.7 1813.0,217.6 1814.0,217.3 1815.0,215.0 1816.0,220.6 1817.0,222.3 1818.0,224.0 1819.0,228.4 1820.0,231.0 1821.0,230.0 1822.0,225.8 1823.0,223.8 1824.0,221.0 1825.0,219.3 1826.0,224.6 1827.0,224.0 1828.0,219.4 1829.0,220.4 1830.0,215.0 1831.0,220.2 1832.0,222.5 1833.0,228.0 1834.0,218.6 1835.0,213.5 1836.0,214.6 1837.0,219.3 1838.0,221.0 1839.0,223.0 1840.0,220.5 1841.0,221.1 1842.0,224.4 1843.5,226.0" fill="none" stroke="#e4e4de" stroke-width="1.3" stroke-linejoin="round"/>
<line x1="1103" y1="69" x2="1103" y2="270.5" stroke="#d81818" stroke-width="1.3"/>
<line x1="1344.3" y1="69" x2="1344.3" y2="270.5" stroke="#e6e63c" stroke-width="1.3"/>
<rect x="845.5" y="69" width="998.0" height="201.5" fill="none" stroke="#909090" stroke-width="1.4"/>
<g>
<rect x="831.6" y="69.4" width="14" height="201.4" fill="#b2b2b2" stroke="#ece45a" stroke-width="1"/>
<rect x="832.2" y="70" width="12.9" height="12.4" fill="#e60c0c"/>
<path d="M832.7 82V70.5H844.6" stroke="#ff7a6a" stroke-width="0.9" fill="none"/>
<path d="M832.7 82.1H844.7V70.8" stroke="#8a0404" stroke-width="0.9" fill="none"/>
<rect x="832.2" y="83.4" width="12.9" height="12.4" fill="#e60c0c"/>
<path d="M832.7 95.4V83.9H844.6" stroke="#ff7a6a" stroke-width="0.9" fill="none"/>
<path d="M832.7 95.5H844.7V84.2" stroke="#8a0404" stroke-width="0.9" fill="none"/>
<rect x="832.2" y="258.2" width="12.9" height="12.4" fill="#e60c0c"/>
<path d="M832.7 270.2V258.7H844.6" stroke="#ff7a6a" stroke-width="0.9" fill="none"/>
<path d="M832.7 270.3H844.7V259.0" stroke="#8a0404" stroke-width="0.9" fill="none"/>
<rect x="832.2" y="111" width="12.9" height="115.5" fill="#ff0606"/>
<path d="M832.7 226V111.5H844.6" stroke="#ff6a5a" stroke-width="0.8" fill="none"/>
<circle cx="838.7" cy="76.2" r="2.9" fill="none" stroke="#ffb030" stroke-width="1"/><path d="M837.4 76.2h2.6" stroke="#ffb030" stroke-width="1"/>
<path d="M835.6 92.6L838.8 87L842 92.6Z" fill="#ffd428"/>
<path d="M835.6 261.8L838.8 267.4L842 261.8Z" fill="#ffd428"/>
</g>
<g fill="#fff" font-size="16.5">
<text x="816" y="104.1" text-anchor="end">20.0</text>
<text x="816" y="161.8" text-anchor="end">0.0</text>
<text x="816" y="219.2" text-anchor="end">-20.0</text>
<text x="816" y="276.2" text-anchor="end">-40.0</text>
<text x="930.3" y="290.3" text-anchor="middle">224.8</text>
<text x="1027.8" y="290.3" text-anchor="middle">225</text>
<text x="1125.4" y="290.3" text-anchor="middle">225.2</text>
<text x="1222.9" y="290.3" text-anchor="middle">225.4</text>
<text x="1320.5" y="290.3" text-anchor="middle">225.6</text>
<text x="1418.0" y="290.3" text-anchor="middle">225.8</text>
<text x="1515.6" y="290.3" text-anchor="middle">226</text>
<text x="1613.2" y="290.3" text-anchor="middle">226.2</text>
<text x="1710.7" y="290.3" text-anchor="middle">226.4</text>
<text x="1808.2" y="290.3" text-anchor="middle">226.6</text>
</g>
<text x="1343.7" y="318.4" text-anchor="middle" fill="#fff" font-size="19.9">Frequency (MHz)</text>
<text transform="translate(748.3 170.5) rotate(-90)" text-anchor="middle" fill="#fff" font-size="19.9">Magnitude (dB)</text>
</svg>
<div class="hsplit" style="left:0px;top:335px;width:1874px;height:6px;background:#8a8a8a;"></div>
<div class="statusbar" style="left:0px;top:341px;width:617px;height:49px;background:#2e2e2e;"></div>
<div style="left:0px;top:341px;width:117px;height:49px;background:#252526;"></div>
<div class="toolbar" style="left:620px;top:341px;width:1254px;height:49px;background:#252525;"></div>
<div style="left:617px;top:341px;width:3px;height:50px;background:#f2f2f2;"></div>
<div style="left:0px;top:389.8px;width:1874px;height:1.4px;background:#eef6fb;"></div>
<div class="combo" style="left:29.1px;top:354.1px;width:74.9px;height:26.9px;background:#262626;border:1px solid #848484;border-radius:3px;"></div>
<span class="t" style="left:32.80px;top:357.28px;font-size:14.5px;line-height:19px;color:#fff;letter-spacing:-0.355px;">12B</span>
<svg style="left:74px;top:360px" width="20" height="14" viewBox="74 360 20 14"><path d="M76.8 363.4H90.4L83.6 370.2Z" fill="#fff"/></svg>
<div style="left:116.9px;top:341px;width:1.1px;height:49px;background:#ecd6d6;"></div>
<div class="eid" style="left:118px;top:341px;width:136px;height:49px;background:#ae1717;"></div>
<span class="t" style="left:137.00px;top:356.09px;font-size:18.2px;line-height:23px;color:#ff7272;letter-spacing:-0.237px;">EId: E002</span>
<span class="t" style="left:241.30px;top:356.09px;font-size:18.2px;line-height:23px;color:#e4e43a;background:linear-gradient(90deg,#f08a20 0,#f08a20 13.6px,#e4e43a 13.6px);-webkit-background-clip:text;background-clip:text;-webkit-text-fill-color:transparent;transform:scaleX(0.9617);transform-origin:0 50%;">SR DAB</span>
<span class="t" style="left:332.50px;top:355.62px;font-size:19px;line-height:24px;color:#fff;letter-spacing:0.660px;">2019-11-08</span>
<span class="t" style="left:446.70px;top:355.62px;font-size:19px;line-height:24px;color:#fff;letter-spacing:-0.247px;">14:52:48 Z</span>
<div class="combo" style="left:633.5px;top:354.5px;width:30.2px;height:26.4px;background:#262626;border:1px solid #848484;border-radius:3px;"></div>
<svg style="left:640px;top:360px" width="18" height="14" viewBox="640 360 18 14"><path d="M642.2 364.4H654.8L648.5 370.6Z" fill="#fff"/></svg>
<svg style="left:690px;top:350px" width="82" height="36" viewBox="690 350 82 36"><circle cx="708.2" cy="367.8" r="14" fill="#1d5c90"/><circle cx="708.2" cy="367.8" r="5.4" fill="#ff1010"/><circle cx="751.7" cy="367.8" r="14" fill="#153a5e"/><rect x="746.3" y="362.4" width="10.8" height="10.8" fill="#050505"/></svg>
<div class="combo" style="left:1837.4px;top:352.6px;width:44px;height:26px;background:#1d1d1d;border:1px solid #8c8c8c;border-radius:3px;"></div>
<span class="t" style="left:1840.20px;top:356.07px;font-size:14.8px;line-height:19px;color:#fff;transform:scaleX(0.9634);transform-origin:0 50%;">DAB</span>
<div class="svc-list" style="left:0px;top:391px;width:214px;height:579px;background:#1d5a8a;"></div>
<div class="hdr" style="left:0px;top:391px;width:214px;height:42.6px;background:#0e2d52;"></div>
<div style="left:0;top:391px;width:209.3px;height:43px;overflow:hidden"><span class="t" style="left:4.60px;top:7.42px;font-size:23.6px;line-height:30px;color:#ffff2a;transform:scaleX(1.082);transform-origin:0 50%;">No Service Selected</span></div>
<span class="t" style="left:5.70px;top:441.79px;font-size:18.8px;line-height:24px;color:#fff;letter-spacing:0.085px;">SR Knattekanalen</span>
<span class="t" style="left:5.70px;top:472.89px;font-size:18.8px;line-height:24px;color:#fff;transform:scaleX(0.9019);transform-origin:0 50%;">SR P1</span>
<span class="t" style="left:5.70px;top:504.59px;font-size:18.8px;line-height:24px;color:#fff;transform:scaleX(0.9074);transform-origin:0 50%;">SR P2</span>
<span class="t" style="left:5.70px;top:536.09px;font-size:18.8px;line-height:24px;color:#fff;letter-spacing:-0.189px;">SR P3 Din Gata</span>
<span class="t" style="left:5.70px;top:567.59px;font-size:18.8px;line-height:24px;color:#fff;letter-spacing:0.036px;">SR P4 Stockholm</span>
<span class="t" style="left:5.70px;top:599.49px;font-size:18.8px;line-height:24px;color:#fff;letter-spacing:-0.121px;">SR P7 Sisuradio</span>
<div class="vsplit" style="left:213.9px;top:391px;width:6.8px;height:579px;background:#f2f2f2;"></div>
<div class="quality" style="left:220.7px;top:391px;width:226px;height:579px;background:#1d5a8a;"></div>
<div class="hdr" style="left:220.7px;top:391px;width:226px;height:42.6px;background:#0e2d52;"></div>
<span class="t" style="left:226.00px;top:398.42px;font-size:23.6px;line-height:30px;color:#fff;transform:scaleX(1.14);transform-origin:0 50%;">Service Quality</span>
<span class="t" style="left:233.20px;top:452.97px;font-size:17.4px;line-height:22px;color:#fff;transform:scaleX(0.9171);transform-origin:0 50%;">SNR (dB)</span>
<div class="meter" style="left:383px;top:447.0px;width:50px;height:31px;background:#868686;"></div>
<div style="left:383px;top:447.0px;width:14px;height:31px;background:#ff0808;"></div>
<span class="t" style="left:408.30px;top:454.88px;font-size:14.2px;line-height:18px;color:#fff;letter-spacing:-0.500px;transform:translateX(-50%);">9.5</span>
<span class="t" style="left:233.20px;top:491.59px;font-size:17.4px;line-height:22px;color:#fff;transform:scaleX(0.9306);transform-origin:0 50%;">FIC (ok %)</span>
<div class="meter" style="left:383px;top:485.6px;width:50px;height:31px;background:#868686;"></div>
<div style="left:383px;top:485.6px;width:49px;height:31px;background:#008200;"></div>
<span class="t" style="left:408.30px;top:493.50px;font-size:14.2px;line-height:18px;color:#fff;letter-spacing:-0.500px;transform:translateX(-50%);">97</span>
<span class="t" style="left:233.20px;top:530.21px;font-size:17.4px;line-height:22px;color:#fff;transform:scaleX(0.9211);transform-origin:0 50%;">RS (ok %)</span>
<div class="meter" style="left:383px;top:524.2px;width:50px;height:31px;background:#868686;"></div>
<span class="t" style="left:233.20px;top:568.83px;font-size:17.4px;line-height:22px;color:#fff;letter-spacing:0.077px;">Null Symbol</span>
<div class="meter" style="left:383px;top:562.9px;width:50px;height:31px;background:#868686;"></div>
<div style="left:383px;top:562.9px;width:50px;height:31px;background:#008200;"></div>
<span class="t" style="left:233.20px;top:607.45px;font-size:17.4px;line-height:22px;color:#fff;letter-spacing:-0.238px;">SymbolTime (ms)</span>
<div class="meter" style="left:383px;top:601.5px;width:50px;height:31px;background:#868686;"></div>
<div style="left:383px;top:601.5px;width:8px;height:31px;background:#008200;"></div>
<span class="t" style="left:408.30px;top:609.36px;font-size:14.2px;line-height:18px;color:#fff;letter-spacing:-0.500px;transform:translateX(-50%);">0.24</span>
<span class="t" style="left:233.20px;top:646.07px;font-size:17.4px;line-height:22px;color:#fff;letter-spacing:-0.361px;">FrameTime (ms)</span>
<div class="meter" style="left:383px;top:640.1px;width:50px;height:31px;background:#868686;"></div>
<div style="left:383px;top:640.1px;width:32px;height:31px;background:#008200;"></div>
<span class="t" style="left:408.30px;top:647.98px;font-size:14.2px;line-height:18px;color:#fff;letter-spacing:-0.500px;transform:translateX(-50%);">95.7</span>
<div class="vsplit" style="left:446.7px;top:391px;width:4.4px;height:579px;background:#b8c6d4;box-shadow:0 0 0 0.6px rgba(6,24,44,0.55);"></div>
<div class="tii" style="left:451px;top:391px;width:466px;height:579px;background:#1d5a8a;"></div>
<div class="hdr" style="left:451px;top:391px;width:466px;height:42.6px;background:#0e2d52;"></div>
<div class="tab" style="left:461px;top:400px;width:74.4px;height:34px;background:#808080;border-radius:4px 15px 0 0;border:1px solid #979797;border-bottom:none;"></div>
<span class="t" style="left:476.60px;top:406.68px;font-size:21.4px;line-height:27px;color:#d6d6d6;transform:scaleX(0.8947);transform-origin:0 50%;">Sync</span>
<div class="tab" style="left:536.2px;top:400px;width:54.1px;height:34px;background:#1d5a8a;border-radius:4px 15px 0 0;border:1px solid #3f77a4;border-bottom:none;"></div>
<span class="t" style="left:551.90px;top:406.68px;font-size:21.4px;line-height:27px;color:#fff;transform:scaleX(0.8905);transform-origin:0 50%;">TII</span>
<div class="tab" style="left:591px;top:400px;width:87px;height:34px;background:#808080;border-radius:4px 15px 0 0;border:1px solid #979797;border-bottom:none;"></div>
<span class="t" style="left:607.30px;top:406.68px;font-size:21.4px;line-height:27px;color:#d6d6d6;letter-spacing:0.054px;">Audio</span>
<div class="tab" style="left:678.7px;top:400px;width:72.3px;height:34px;background:#808080;border-radius:4px 15px 0 0;border:1px solid #979797;border-bottom:none;"></div>
<span class="t" style="left:695.70px;top:406.68px;font-size:21.4px;line-height:27px;color:#d6d6d6;transform:scaleX(0.9050);transform-origin:0 50%;">AAC</span>
<div class="tab" style="left:752px;top:400px;width:107px;height:34px;background:#808080;border-radius:4px 15px 0 0;border:1px solid #979797;border-bottom:none;"></div>
<span class="t" style="left:768.10px;top:406.68px;font-size:21.4px;line-height:27px;color:#d6d6d6;letter-spacing:0.013px;">Options</span>
<svg style="left:490px;top:442px" width="60" height="22" viewBox="490 442 60 22"><circle cx="499.6" cy="452.5" r="5.6" fill="#ff1010"/><rect x="531" y="446.4" width="10.5" height="12.3" fill="#0f2e4c"/></svg>
<div style="left:469.3px;top:471px;width:310px;height:1px;background:#9db6cd;"></div>
<div style="left:791.5px;top:434px;width:1px;height:37.5px;background:#4d7fa9;"></div>
<span class="t" style="left:798.20px;top:455.87px;font-size:17.4px;line-height:22px;color:#fff;letter-spacing:-0.193px;">Threshold</span>
<span class="t" style="left:469.50px;top:493.93px;font-size:17.8px;line-height:23px;color:#fff;letter-spacing:0.199px;">Pattern</span>
<span class="t" style="left:553.70px;top:493.93px;font-size:17.8px;line-height:23px;color:#fff;letter-spacing:0.680px;">MainId</span>
<span class="t" style="left:636.00px;top:493.93px;font-size:17.8px;line-height:23px;color:#fff;letter-spacing:0.163px;">SubId</span>
<span class="t" style="left:708.50px;top:493.93px;font-size:17.8px;line-height:23px;color:#fff;letter-spacing:0.459px;">Strength</span>
<div style="left:469.3px;top:516.2px;width:310px;height:1px;background:#b6c8d9;"></div>
<span class="t" style="left:471.40px;top:530.97px;font-size:17.4px;line-height:22px;color:#fff;letter-spacing:-0.119px;">0x4b</span>
<span class="t" style="left:556.90px;top:530.97px;font-size:17.4px;line-height:22px;color:#fff;transform:scaleX(0.9216);transform-origin:0 50%;">16</span>
<span class="t" style="left:638.70px;top:530.97px;font-size:17.4px;line-height:22px;color:#fff;">5</span>
<span class="t" style="left:711.00px;top:530.97px;font-size:17.4px;line-height:22px;color:#fff;transform:scaleX(0.9544);transform-origin:0 50%;">0.99</span>
<span class="t" style="left:471.40px;top:561.97px;font-size:17.4px;line-height:22px;color:#fff;letter-spacing:-0.119px;">0x4b</span>
<span class="t" style="left:556.90px;top:561.97px;font-size:17.4px;line-height:22px;color:#fff;transform:scaleX(0.9216);transform-origin:0 50%;">16</span>
<span class="t" style="left:638.70px;top:561.97px;font-size:17.4px;line-height:22px;color:#fff;">6</span>
<span class="t" style="left:711.00px;top:561.97px;font-size:17.4px;line-height:22px;color:#fff;transform:scaleX(0.9544);transform-origin:0 50%;">0.71</span>
<div class="vtrk" style="left:831.3px;top:497.4px;width:3.1px;height:149.4px;background:linear-gradient(90deg,#c9d4de,#f2f4f6 50%,#c9d4de);border-radius:1.5px;"></div>
<div class="thumb" style="left:824.9px;top:625.6px"></div>
<span class="t" style="left:815.80px;top:654.70px;font-size:17.6px;line-height:22px;color:#fff;transform:scaleX(0.9231);transform-origin:0 50%;">0.05</span>
<div class="vsplit" style="left:916.7px;top:391px;width:6.4px;height:579px;background:#eef0f3;"></div>
<div class="cir-title" style="left:923px;top:391px;width:951px;height:25px;background:#0e2d52;"></div>
<span class="t" style="left:1287.90px;top:391.67px;font-size:17.4px;line-height:22px;color:#fff;letter-spacing:0.154px;">Channel Impulse Response (CIR)</span>
<div class="cir-body" style="left:923px;top:416px;width:951px;height:274.5px;background:#000;"></div>
<div class="radio" style="left:935.7px;top:430.1px"></div>
<span class="t" style="left:957.70px;top:429.83px;font-size:15.2px;line-height:19px;color:#fff;transform:scaleX(0.8885);transform-origin:0 50%;">Freeze</span>
<div class="radio" style="left:1024.8px;top:430.1px"></div>
<span class="t" style="left:1046.70px;top:429.83px;font-size:15.2px;line-height:19px;color:#fff;letter-spacing:-0.185px;">Gradient</span>
<span class="t" style="left:942.10px;top:481.33px;font-size:15.2px;line-height:19px;color:#fff;letter-spacing:-0.189px;">Smoothing Level</span>
<div style="left:943.7px;top:506.8px;width:1px;height:4.6px;background:#c8c8c8"></div><div style="left:960.0px;top:506.8px;width:1px;height:4.6px;background:#c8c8c8"></div><div style="left:976.4px;top:506.8px;width:1px;height:4.6px;background:#c8c8c8"></div><div style="left:992.7px;top:506.8px;width:1px;height:4.6px;background:#c8c8c8"></div><div style="left:1009.1px;top:506.8px;width:1px;height:4.6px;background:#c8c8c8"></div><div style="left:1025.4px;top:506.8px;width:1px;height:4.6px;background:#c8c8c8"></div><div style="left:1041.7px;top:506.8px;width:1px;height:4.6px;background:#c8c8c8"></div><div style="left:1058.1px;top:506.8px;width:1px;height:4.6px;background:#c8c8c8"></div><div style="left:1074.4px;top:506.8px;width:1px;height:4.6px;background:#c8c8c8"></div><div style="left:1090.8px;top:506.8px;width:1px;height:4.6px;background:#c8c8c8"></div><div style="left:1107.1px;top:506.8px;width:1px;height:4.6px;background:#c8c8c8"></div>
<div class="trk" style="left:936.0px;top:517.8px;width:172.3px"></div>
<div class="thumb" style="left:1017.9px;top:511.3px"></div>
<span class="t" style="left:942.00px;top:547.83px;font-size:15.2px;line-height:19px;color:#fff;letter-spacing:-0.300px;">Zoom X</span>
<div class="trk" style="left:936.0px;top:580.4px;width:172.3px"></div>
<div class="thumb" style="left:988.0px;top:573.7px"></div>
<span class="t" style="left:942.00px;top:611.03px;font-size:15.2px;line-height:19px;color:#fff;letter-spacing:-0.434px;">Zoom Y</span>
<div class="trk" style="left:936.0px;top:642.8px;width:172.3px"></div>
<div class="thumb" style="left:936.0px;top:636.1px"></div>
<div style="left:923px;top:670px;width:200px;height:20.5px;overflow:hidden"><span class="t" style="left:19.00px;top:2.83px;font-size:15.2px;line-height:19px;color:#fff;letter-spacing:-0.469px;">x-Axis</span></div>
<div class="sb" style="left:1116.4px;top:417.5px;width:5.3px;height:207.3px;background:#a6a6a6;border-radius:3px;"></div>
<div style="left:1129px;top:416px;width:1px;height:274.5px;background:#303030;"></div>
<svg class="cir-chart" style="left:1130px;top:416px" width="744" height="274" viewBox="1130 416 744 274" font-family="Liberation Sans,Arial,sans-serif">
<rect x="1246.3" y="436" width="278.20000000000005" height="184.79999999999995" fill="#404040"/>
<path d="M1274.1 436V620.8M1309.3 436V620.8M1344.5 436V620.8M1379.8 436V620.8M1415.0 436V620.8M1450.2 436V620.8M1485.4 436V620.8M1520.6 436V620.8M1555.8 436V620.8M1591.0 436V620.8M1626.2 436V620.8M1661.4 436V620.8M1696.6 436V620.8M1731.9 436V620.8M1767.1 436V620.8M1802.3 436V620.8M1837.5 436V620.8M1246.3 473.0H1869.8M1246.3 509.9H1869.8M1246.3 546.9H1869.8M1246.3 583.8H1869.8" stroke="#8a8a8a" stroke-width="1.05" fill="none"/>
<rect x="1246.3" y="436" width="623.5" height="184.79999999999995" fill="none" stroke="#909090" stroke-width="1.3"/>
<line x1="1246.3" y1="436" x2="1246.3" y2="620.8" stroke="#e01818" stroke-width="1.15"/>
<line x1="1524.5" y1="436" x2="1524.5" y2="633.8" stroke="#e6e640" stroke-width="1.2" stroke-dasharray="1.2 1.6"/>
<polyline points="1247.5,584.3 1250.0,581.0 1252.6,580.4 1255.0,581.5 1258.5,579.0 1263.0,575.0 1267.5,571.4 1272.0,568.5 1276.5,565.5 1279.0,568.5 1282.5,570.8 1287.0,570.5 1291.4,571.4 1296.0,577.0 1300.4,581.0 1305.0,579.5 1309.4,579.0 1312.0,581.0 1315.4,583.4 1318.0,583.8 1321.3,584.9 1324.5,582.0 1327.0,583.5 1330.3,584.0 1333.5,580.5 1336.3,578.0 1339.0,581.0 1342.3,584.0 1345.0,581.5 1348.2,580.4 1353.0,578.5 1357.2,576.8 1361.0,578.5 1363.0,579.0 1365.5,573.0 1367.7,569.0 1370.5,573.8 1372.5,572.5 1375.0,572.0 1378.0,575.0 1381.0,578.0 1385.5,576.0 1389.0,578.5 1393.0,580.4 1396.0,577.0 1399.0,574.4 1403.0,570.5 1406.5,567.8 1409.5,573.0 1412.5,579.0 1415.0,576.0 1417.0,574.4 1421.0,574.8 1424.5,575.0 1428.0,577.0 1432.0,578.0 1435.5,571.0 1439.4,564.0 1443.0,570.0 1446.0,569.5 1449.9,567.8 1454.0,565.5 1458.8,562.5 1462.0,561.5 1464.8,561.0 1468.7,555.0 1472.0,556.5 1475.3,557.0 1479.8,555.9 1485.0,559.5 1487.5,557.5 1490.0,555.0 1494.7,558.0 1498.0,552.0 1502.0,541.5 1505.0,547.0 1508.0,540.0 1511.0,532.6 1514.0,529.6 1516.5,519.0 1518.6,510.0 1521.6,505.0 1524.0,501.0 1527.0,499.0 1530.0,496.7 1533.0,502.0 1535.9,507.0 1541.9,516.0 1547.2,527.0 1550.5,520.5 1553.8,514.6 1557.5,509.8 1561.3,506.3 1565.8,506.3 1568.0,510.0 1570.3,514.0 1573.3,513.2 1577.0,525.0 1580.7,537.0 1583.7,536.2 1586.5,543.5 1589.0,550.5 1592.7,548.1 1597.0,554.5 1601.6,561.0 1606.0,561.0 1609.0,568.4 1613.6,563.0 1616.6,567.0 1619.6,562.5 1625.5,566.0 1630.0,570.0 1634.5,564.9 1637.5,570.0 1642.0,568.2 1646.5,567.0 1651.0,569.0 1654.0,565.5 1658.4,568.4 1664.4,565.5 1673.4,566.4 1679.4,568.4 1682.4,564.0 1688.3,566.4 1697.3,567.9 1702.0,566.0 1706.3,564.6 1712.2,567.0 1713.7,564.9 1717.6,570.0 1722.7,565.5 1727.2,570.8 1733.0,576.0 1739.2,576.8 1742.2,573.0 1745.1,577.4 1749.6,573.0 1754.1,581.9 1755.6,580.4 1758.6,586.4 1764.6,583.4 1769.0,584.0 1770.5,581.9 1776.5,583.4 1781.0,573.8 1785.5,568.4 1790.0,572.3 1794.5,572.0 1799.0,575.0 1803.4,576.8 1810.9,573.8 1816.9,567.8 1821.4,570.8 1824.4,569.9 1827.4,572.9 1830.3,569.9 1837.8,571.4 1842.9,575.3 1848.3,572.0 1851.3,572.9 1855.8,570.5 1860.2,565.5 1865.0,563.5 1869.2,561.9" fill="none" stroke="#e8e8e8" stroke-width="1.1" stroke-linejoin="round"/>
<circle cx="1527" cy="503.3" r="5.2" fill="#ffee10"/>
<rect x="1246.3" y="621.8" width="623.5" height="13" fill="#bebebe"/>
<rect x="1384" y="621.8" width="69.5" height="13" fill="#ff0808" stroke="#c80000" stroke-width="0.8"/>
<rect x="1246.6" y="622" width="12.4" height="12.6" fill="#f01010" stroke="#ff6060" stroke-width="0.8"/>
<rect x="1260" y="622" width="12.6" height="12.6" fill="#f01010" stroke="#ff6060" stroke-width="0.8"/>
<rect x="1857.2" y="622" width="12.4" height="12.6" fill="#f01010" stroke="#ff6060" stroke-width="0.8"/>
<circle cx="1252.8" cy="628.3" r="2.8" fill="none" stroke="#901010" stroke-width="1"/><path d="M1251.4 628.3h2.8" stroke="#901010" stroke-width="1"/>
<path d="M1269.4 624.8L1263.2 628.3L1269.4 631.8Z" fill="#500808"/>
<path d="M1860.6 624.8L1866.8 628.3L1860.6 631.8Z" fill="#500808"/>
<g fill="#fff" font-size="16.8">
<text x="1235.6" y="442.0" text-anchor="end">-10.0</text>
<text x="1235.6" y="479.0" text-anchor="end">-20.0</text>
<text x="1235.6" y="515.9" text-anchor="end">-30.0</text>
<text x="1235.6" y="552.9" text-anchor="end">-40.0</text>
<text x="1235.6" y="589.8" text-anchor="end">-50.0</text>
<text x="1235.6" y="626.8" text-anchor="end">-60.0</text>
</g><g fill="#fff" font-size="12.7">
<text x="1272.9" y="651.1" text-anchor="middle">-14</text>
<text x="1308.1" y="651.1" text-anchor="middle">-12</text>
<text x="1343.3" y="651.1" text-anchor="middle">-10</text>
<text x="1378.6" y="651.1" text-anchor="middle">-8</text>
<text x="1413.8" y="651.1" text-anchor="middle">-6</text>
<text x="1449.0" y="651.1" text-anchor="middle">-4</text>
<text x="1484.2" y="651.1" text-anchor="middle">-2</text>
<text x="1520.1" y="651.1" text-anchor="middle">0</text>
<text x="1555.3" y="651.1" text-anchor="middle">2</text>
<text x="1590.5" y="651.1" text-anchor="middle">4</text>
<text x="1625.7" y="651.1" text-anchor="middle">6</text>
<text x="1660.9" y="651.1" text-anchor="middle">8</text>
<text x="1696.1" y="651.1" text-anchor="middle">10</text>
<text x="1731.4" y="651.1" text-anchor="middle">12</text>
<text x="1766.6" y="651.1" text-anchor="middle">14</text>
<text x="1801.8" y="651.1" text-anchor="middle">16</text>
<text x="1837.0" y="651.1" text-anchor="middle">18</text>
</g>
<text x="1557.8" y="673" text-anchor="middle" fill="#fff" font-size="17.2">Distance Difference (km)</text>
<text transform="translate(1174.6 528) rotate(-90)" text-anchor="middle" fill="#fff" font-size="15.6" font-weight="bold">Magnitude (dB)</text>
</svg>
<div class="hsplit" style="left:923px;top:690.5px;width:951px;height:5.5px;background:#8a8a8a;"></div>
<div class="tiic-title" style="left:923px;top:696px;width:951px;height:25px;background:#0e2d52;"></div>
<span class="t" style="left:1377.00px;top:696.67px;font-size:17.4px;line-height:22px;color:#fff;letter-spacing:0.064px;">TII Carriers</span>
<div class="tiic-body" style="left:923px;top:721px;width:951px;height:243.5px;background:#000;"></div>
<div class="hsplit" style="left:923px;top:964.5px;width:951px;height:5.5px;background:#8a8a8a;"></div>
<svg class="tii-chart" style="left:923px;top:721px" width="951" height="243" viewBox="923 721 951 243" font-family="Liberation Sans,Arial,sans-serif">
<rect x="1033.2" y="898" width="824.0" height="7.2999999999999545" fill="#4e4e4e"/>
<path d="M1083.7 740V905.3M1164.2 740V905.3M1244.7 740V905.3M1325.2 740V905.3M1405.7 740V905.3M1486.2 740V905.3M1566.7 740V905.3M1647.2 740V905.3M1727.7 740V905.3M1808.1 740V905.3M1033.2 773.3H1857.2M1033.2 806.5H1857.2M1033.2 840.5H1857.2M1033.2 873.2H1857.2" stroke="#8a8a8a" stroke-width="1.05" fill="none"/>
<path d="M1033.2 903.2H1137M1756 903.2H1857.2" stroke="#c8c8c8" stroke-width="1.2"/>
<rect x="1033.2" y="740" width="824.0" height="165.29999999999995" fill="none" stroke="#909090" stroke-width="1.3"/>
<line x1="1072.8" y1="740" x2="1072.8" y2="905.3" stroke="#c41a1a" stroke-width="1.1"/>
<path d="M1136.8 740V907.3M1291.6 740V907.3M1445.9 740V907.3M1600.9 740V907.3M1756 740V907.3" stroke="#e6e632" stroke-width="2.4" stroke-dasharray="2.2 2.2" fill="none"/>
<path d="M1159.6 905.3L1160.4 783.4L1161.5 783.4L1162.8 829.7L1163.9 905.3Z" fill="#6fa478" fill-opacity="0.9"/>
<path d="M1160.1 905.3L1160.9 784.4" stroke="#cfeecf" stroke-width="1.2" fill="none"/>
<path d="M1163.4 905.3L1162.4 829.7" stroke="#b4dcb6" stroke-width="1" fill="none"/>
<path d="M1160.9 783.4V793.4" stroke="#f4fff4" stroke-width="1.2"/>
<path d="M1217.5 905.3L1218.3 782.0L1219.4 782.0L1220.7 828.9L1221.8 905.3Z" fill="#6fa478" fill-opacity="0.9"/>
<path d="M1218.0 905.3L1218.8 783.0" stroke="#cfeecf" stroke-width="1.2" fill="none"/>
<path d="M1221.3 905.3L1220.3 828.9" stroke="#b4dcb6" stroke-width="1" fill="none"/>
<path d="M1218.8 782.0V792.0" stroke="#f4fff4" stroke-width="1.2"/>
<path d="M1256.0 905.3L1256.8 826.6L1257.9 826.6L1259.2 856.5L1260.3 905.3Z" fill="#6fa478" fill-opacity="0.9"/>
<path d="M1256.5 905.3L1257.3 827.6" stroke="#cfeecf" stroke-width="1.2" fill="none"/>
<path d="M1259.8 905.3L1258.8 856.5" stroke="#b4dcb6" stroke-width="1" fill="none"/>
<path d="M1257.3 826.6V836.6" stroke="#f4fff4" stroke-width="1.2"/>
<path d="M1275.3 905.3L1276.1 775.5L1277.2 775.5L1278.5 824.8L1279.6 905.3Z" fill="#6fa478" fill-opacity="0.9"/>
<path d="M1275.8 905.3L1276.6 776.5" stroke="#cfeecf" stroke-width="1.2" fill="none"/>
<path d="M1279.1 905.3L1278.1 824.8" stroke="#b4dcb6" stroke-width="1" fill="none"/>
<path d="M1276.6 775.5V785.5" stroke="#f4fff4" stroke-width="1.2"/>
<path d="M1314.1 905.3L1314.9 784.3L1316.0 784.3L1317.3 830.3L1318.4 905.3Z" fill="#6fa478" fill-opacity="0.9"/>
<path d="M1314.6 905.3L1315.4 785.3" stroke="#cfeecf" stroke-width="1.2" fill="none"/>
<path d="M1317.9 905.3L1316.9 830.3" stroke="#b4dcb6" stroke-width="1" fill="none"/>
<path d="M1315.4 784.3V794.3" stroke="#f4fff4" stroke-width="1.2"/>
<path d="M1372.0 905.3L1372.8 765.0L1373.9 765.0L1375.2 818.3L1376.3 905.3Z" fill="#6fa478" fill-opacity="0.9"/>
<path d="M1372.5 905.3L1373.3 766.0" stroke="#cfeecf" stroke-width="1.2" fill="none"/>
<path d="M1375.8 905.3L1374.8 818.3" stroke="#b4dcb6" stroke-width="1" fill="none"/>
<path d="M1373.3 765.0V775.0" stroke="#f4fff4" stroke-width="1.2"/>
<path d="M1410.7 905.3L1411.5 762.9L1412.6 762.9L1413.9 817.0L1415.0 905.3Z" fill="#6fa478" fill-opacity="0.9"/>
<path d="M1411.2 905.3L1412.0 763.9" stroke="#cfeecf" stroke-width="1.2" fill="none"/>
<path d="M1414.5 905.3L1413.5 817.0" stroke="#b4dcb6" stroke-width="1" fill="none"/>
<path d="M1412.0 762.9V772.9" stroke="#f4fff4" stroke-width="1.2"/>
<path d="M1430.1 905.3L1430.9 764.3L1432.0 764.3L1433.3 817.9L1434.4 905.3Z" fill="#6fa478" fill-opacity="0.9"/>
<path d="M1430.6 905.3L1431.4 765.3" stroke="#cfeecf" stroke-width="1.2" fill="none"/>
<path d="M1433.9 905.3L1432.9 817.9" stroke="#b4dcb6" stroke-width="1" fill="none"/>
<path d="M1431.4 764.3V774.3" stroke="#f4fff4" stroke-width="1.2"/>
<path d="M1469.2 905.3L1470.0 775.5L1471.1 775.5L1472.4 824.8L1473.5 905.3Z" fill="#6fa478" fill-opacity="0.9"/>
<path d="M1469.7 905.3L1470.5 776.5" stroke="#cfeecf" stroke-width="1.2" fill="none"/>
<path d="M1473.0 905.3L1472.0 824.8" stroke="#b4dcb6" stroke-width="1" fill="none"/>
<path d="M1470.5 775.5V785.5" stroke="#f4fff4" stroke-width="1.2"/>
<path d="M1527.1 905.3L1527.9 795.2L1529.0 795.2L1530.3 837.0L1531.4 905.3Z" fill="#6fa478" fill-opacity="0.9"/>
<path d="M1527.6 905.3L1528.4 796.2" stroke="#cfeecf" stroke-width="1.2" fill="none"/>
<path d="M1530.9 905.3L1529.9 837.0" stroke="#b4dcb6" stroke-width="1" fill="none"/>
<path d="M1528.4 795.2V805.2" stroke="#f4fff4" stroke-width="1.2"/>
<path d="M1565.9 905.3L1566.7 783.4L1567.8 783.4L1569.1 829.7L1570.2 905.3Z" fill="#6fa478" fill-opacity="0.9"/>
<path d="M1566.4 905.3L1567.2 784.4" stroke="#cfeecf" stroke-width="1.2" fill="none"/>
<path d="M1569.7 905.3L1568.7 829.7" stroke="#b4dcb6" stroke-width="1" fill="none"/>
<path d="M1567.2 783.4V793.4" stroke="#f4fff4" stroke-width="1.2"/>
<path d="M1584.7 905.3L1585.5 787.3L1586.6 787.3L1587.9 832.1L1589.0 905.3Z" fill="#6fa478" fill-opacity="0.9"/>
<path d="M1585.2 905.3L1586.0 788.3" stroke="#cfeecf" stroke-width="1.2" fill="none"/>
<path d="M1588.5 905.3L1587.5 832.1" stroke="#b4dcb6" stroke-width="1" fill="none"/>
<path d="M1586.0 787.3V797.3" stroke="#f4fff4" stroke-width="1.2"/>
<path d="M1623.5 905.3L1624.3 761.4L1625.4 761.4L1626.7 816.1L1627.8 905.3Z" fill="#6fa478" fill-opacity="0.9"/>
<path d="M1624.0 905.3L1624.8 762.4" stroke="#cfeecf" stroke-width="1.2" fill="none"/>
<path d="M1627.3 905.3L1626.3 816.1" stroke="#b4dcb6" stroke-width="1" fill="none"/>
<path d="M1624.8 761.4V771.4" stroke="#f4fff4" stroke-width="1.2"/>
<path d="M1681.7 905.3L1682.5 766.7L1683.6 766.7L1684.9 819.4L1686.0 905.3Z" fill="#6fa478" fill-opacity="0.9"/>
<path d="M1682.2 905.3L1683.0 767.7" stroke="#cfeecf" stroke-width="1.2" fill="none"/>
<path d="M1685.5 905.3L1684.5 819.4" stroke="#b4dcb6" stroke-width="1" fill="none"/>
<path d="M1683.0 766.7V776.7" stroke="#f4fff4" stroke-width="1.2"/>
<path d="M1720.5 905.3L1721.3 740.8L1722.4 740.8L1723.7 803.3L1724.8 905.3Z" fill="#6fa478" fill-opacity="0.9"/>
<path d="M1721.0 905.3L1721.8 741.8" stroke="#cfeecf" stroke-width="1.2" fill="none"/>
<path d="M1724.3 905.3L1723.3 803.3" stroke="#b4dcb6" stroke-width="1" fill="none"/>
<path d="M1721.8 740.8V750.8" stroke="#f4fff4" stroke-width="1.2"/>
<path d="M1739.3 905.3L1740.1 760.0L1741.2 760.0L1742.5 815.2L1743.6 905.3Z" fill="#6fa478" fill-opacity="0.9"/>
<path d="M1739.8 905.3L1740.6 761.0" stroke="#cfeecf" stroke-width="1.2" fill="none"/>
<path d="M1743.1 905.3L1742.1 815.2" stroke="#b4dcb6" stroke-width="1" fill="none"/>
<path d="M1740.6 760.0V770.0" stroke="#f4fff4" stroke-width="1.2"/>
<path d="M1188.7 905.3L1189.1 898.3L1190.5 898.3L1190.9 905.3Z" fill="#c4c4c4"/>
<path d="M1247.0 905.3L1247.4 901.3L1248.8 901.3L1249.2 905.3Z" fill="#c4c4c4"/>
<path d="M1268.6 905.3L1269.0 902.8L1270.4 902.8L1270.8 905.3Z" fill="#c4c4c4"/>
<path d="M1311.2 905.3L1311.6 894.3L1313.0 894.3L1313.4 905.3Z" fill="#c4c4c4"/>
<path d="M1363.2 905.3L1363.6 902.8L1365.0 902.8L1365.4 905.3Z" fill="#c4c4c4"/>
<path d="M1542.4 905.3L1542.8 901.8L1544.2 901.8L1544.6 905.3Z" fill="#c4c4c4"/>
<path d="M1546.0 905.3L1546.4 896.8L1547.8 896.8L1548.2 905.3Z" fill="#c4c4c4"/>
<path d="M1659.0 905.3L1659.4 902.3L1660.8 902.3L1661.2 905.3Z" fill="#c4c4c4"/>
<g fill="#fff" font-size="16.7">
<text x="1020.2" y="746.1" text-anchor="end">1.0</text>
<text x="1020.2" y="779.4" text-anchor="end">0.8</text>
<text x="1020.2" y="812.6" text-anchor="end">0.6</text>
<text x="1020.2" y="846.6" text-anchor="end">0.4</text>
<text x="1020.2" y="879.3" text-anchor="end">0.2</text>
<text x="1020.2" y="911.4" text-anchor="end">0.0</text>
<text x="1083.3" y="925.5" text-anchor="middle">-900</text>
<text x="1163.8" y="925.5" text-anchor="middle">-700</text>
<text x="1244.3" y="925.5" text-anchor="middle">-500</text>
<text x="1324.8" y="925.5" text-anchor="middle">-300</text>
<text x="1405.3" y="925.5" text-anchor="middle">-100</text>
<text x="1486.2" y="925.5" text-anchor="middle">100</text>
<text x="1566.7" y="925.5" text-anchor="middle">300</text>
<text x="1647.2" y="925.5" text-anchor="middle">500</text>
<text x="1727.7" y="925.5" text-anchor="middle">700</text>
<text x="1808.1" y="925.5" text-anchor="middle">900</text>
</g>
<text x="1445.4" y="949.3" text-anchor="middle" fill="#fff" font-size="17">TII Subcarrier</text>
<text transform="translate(975.8 822.5) rotate(-90)" text-anchor="middle" fill="#fff" font-size="15.4" font-weight="bold">Magnitude</text>
</svg>
</body></html>
